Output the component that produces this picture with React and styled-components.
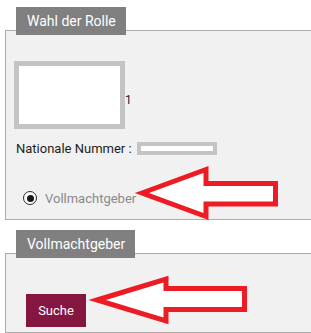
import React from "react";
import styled, { createGlobalStyle } from "styled-components";

const GlobalStyle = createGlobalStyle`
    body {
        margin: 0;
        overflow: hidden;
        background: #ffffff;
        font-family: Roboto, "Liberation Sans", sans-serif;
    }
`

const Page = styled.div`
    position: relative;
    width: 311px;
    height: 333px;
    padding: 7px 0 0 5px;
    box-sizing: border-box;
`

const Group = styled.section`
    margin-bottom: 10px;
`

const Legend = styled.div`
    position: relative;
    z-index: 1;
    display: inline-block;
    margin: 0 0 -9px 11px;
    padding: 0 10px 0 11px;
    height: 28px;
    line-height: 28px;
    background: #808080;
    color: #ffffff;
    font-size: 14px;
`

/* the fieldset runs on past the right edge of the crop, so no right border */
const Panel = styled.div`
    border: 1px solid #ababab;
    border-right: 0;
    background: #f1f1f1;
    padding: ${p => p.$pad};
    display: flex;
    flex-direction: column;
    align-items: flex-start;
`

const PhotoRow = styled.div`
    display: flex;
    align-items: center;
`

const Redacted = styled.div`
    box-sizing: border-box;
    width: ${p => p.$w}px;
    height: ${p => p.$h}px;
    border: ${p => p.$b}px solid #c4c4c4;
    background: #ffffff;
`

const Index = styled.span`
    margin-top: 10px;
    font-size: 12px;
    color: #2a1a2a;
`

const FieldRow = styled.div`
    display: flex;
    align-items: center;
    height: 13px;
    margin-top: 13px;
    margin-left: 2px;
    font-size: 13px;
    color: #1e1e1e;
    gap: 5px;
`

const RadioRow = styled.label`
    display: flex;
    align-items: center;
    gap: 8px;
    height: 14px;
    margin-top: 36px;
    margin-left: 9px;
    font-size: 13px;
    color: #8a8a8a;
`

const Radio = styled.span`
    box-sizing: border-box;
    width: 14px;
    height: 14px;
    border: 1.6px solid #2b2b2b;
    border-radius: 50%;
    display: grid;
    place-items: center;
    background: #ffffff;

    &::after {
        content: "";
        width: 7px;
        height: 7px;
        border-radius: 50%;
        background: #1a1a1a;
    }
`

const Button = styled.button`
    width: 60px;
    height: 33px;
    border: 0;
    background: #84163f;
    color: #ffffff;
    font-family: inherit;
    font-size: 13px;
    padding: 0;
`

const Overlay = styled.svg`
    position: absolute;
    left: 0;
    top: 0;
    pointer-events: none;
`

function Arrow ({ tip, head, shaftTop, shaftBottom, right, headBottom, cy }) {
    const pts = [
        [tip, cy],
        [head, cy - headBottom],
        [head, shaftTop],
        [right, shaftTop],
        [right, shaftBottom],
        [head, shaftBottom],
        [head, cy + headBottom],
    ].map(p => p.join(",")).join(" ")
    return (
        <polygon points={pts} fill="#ffffff" stroke="#ed1c24" strokeWidth="5" strokeLinejoin="miter" strokeMiterlimit="10" />
    )
}

function App () {
return (
<Page>
    <GlobalStyle />
    <Group>
        <Legend>Wahl der Rolle</Legend>
        <Panel $pad="30px 0 14px 8px">
            <PhotoRow>
                <Redacted $w={111} $h={68} $b={5} />
                <Index>1</Index>
            </PhotoRow>
            <FieldRow>
                Nationale Nummer :
                <Redacted $w={80} $h={13} $b={4} />
            </FieldRow>
            <RadioRow>
                <Radio />
                Vollmachtgeber
            </RadioRow>
        </Panel>
    </Group>
    <Group>
        <Legend>Vollmachtgeber</Legend>
        <Panel $pad="40px 0 5px 20px">
            <Button>Suche</Button>
        </Panel>
    </Group>
    <Overlay width="311" height="333" viewBox="0 0 311 333">
        <Arrow tip={142} head={206} right={275.5} shaftTop={183.5} shaftBottom={204} cy={193} headBottom={23.5} />
        <Arrow tip={97} head={166} right={244.5} shaftTop={288.5} shaftBottom={309.5} cy={300} headBottom={21} />
    </Overlay>
</Page>
)
}

export default App
